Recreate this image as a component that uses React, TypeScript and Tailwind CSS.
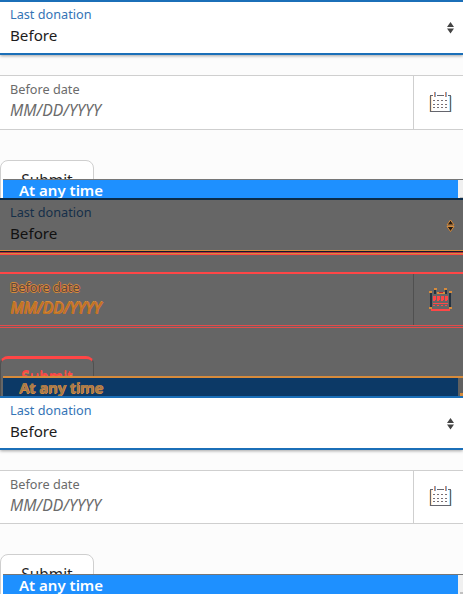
type Variant = "first" | "diff" | "last";

const tones = {
  first: {
    page: "bg-[#fcfcfc]",
    box: "bg-white",
    blue: "border-[#1b6fb8]",
    label: "text-[#3474b6]",
    value: "text-[#1d1d1d]",
    shadow: "shadow-[0_1px_3px_rgba(0,0,0,0.35)]",
    select: "h-[55px]",
    gap: "mt-5",
    date: "h-[55px] border-y border-[#cfcfcf] pt-1",
    iconCell: "-mt-1 pt-4",
    divider: "border-[#cfcfcf]",
    dateLabel: "text-[#6b6b6b]",
    hint: "text-[#6b6b6b]",
    submitGap: "mt-[30px]",
    submit: "border-[#cfcfcf] text-[#1d1d1d] pt-2",
    menuTop: "top-[179px] border-[#767676]",
    menuFill: "bg-[#1e90ff] text-white leading-5",
    track: "bg-[#f0f0f0]",
    thumb: "mt-[17px] bg-[#c1c1c1]",
  },
  diff: {
    page: "bg-[#656565]",
    box: "bg-[#666666]",
    blue: "border-[#0b2c4a]",
    label: "text-[#152f49]",
    value: "text-[#111111]",
    shadow: "",
    select: "h-[52px] !border-b-0",
    gap: "mt-[17px]",
    date: "h-[53px] border-t-2 border-[#ff4646] pt-1",
    iconCell: "-mt-1 pt-3.5",
    divider: "border-[#505050]",
    dateLabel: "text-[#5a4a40] [text-shadow:0_-1px_#d58a3a,0_1px_#d58a3a,1px_0_#f0583f,-1px_0_#d58a3a]",
    hint: "text-[#c07424] [text-shadow:0_-1px_#d68b3c,1px_0_#d8702c]",
    submitGap: "mt-[28px]",
    submit: "border-[#505050] border-t-[3px] border-t-[#ff4646] text-[#ff4646] pt-[7px] [text-shadow:0_1px_#d68b3c,0_-1px_#ff4646]",
    menuTop: "top-[178px] border-[#d68b3c] border-t-2",
    menuFill: "bg-[#0c3966] text-[#a67a4e] leading-[18px] [text-shadow:0_1px_#d68b3c,1px_0_#d68b3c]",
    track: "bg-[#606060]",
    thumb: "mt-[15px] bg-[#d68b3c]",
  },
  last: {
    page: "bg-[#fcfcfc]",
    box: "bg-white",
    blue: "border-[#1b6fb8]",
    label: "text-[#3474b6]",
    value: "text-[#1d1d1d]",
    shadow: "shadow-[0_1px_3px_rgba(0,0,0,0.35)]",
    select: "h-[54px]",
    gap: "mt-5",
    date: "h-[54px] border-y border-[#cfcfcf] pt-1",
    iconCell: "-mt-1 pt-[15px]",
    divider: "border-[#cfcfcf]",
    dateLabel: "text-[#6b6b6b]",
    hint: "text-[#6b6b6b]",
    submitGap: "mt-[30px]",
    submit: "border-[#cfcfcf] text-[#1d1d1d] pt-2",
    menuTop: "top-[178px] border-[#767676]",
    menuFill: "bg-[#1e90ff] text-white leading-5",
    track: "bg-[#f0f0f0]",
    thumb: "mt-[17px] bg-[#c1c1c1]",
  },
};

const columns = [4, 8, 12, 16];

function CalendarIcon({ variant }: { variant: Variant }) {
  const diff = variant === "diff";
  return (
    <svg width="23" height="24" viewBox="0 0 23 24" shapeRendering="crispEdges" className="shrink-0">
      {diff ? (
        <>
          <path d="M1 4h2v16H1zM20 4h2v16h-2z" fill="#263442" />
          <path d="M0 3h3v2H0zM20 3h3v2h-3zM0 19h3v2H0zM20 19h3v2h-3zM5 0h3v2H5zM15 0h3v2h-3zM8 4h8v2H8z" fill="#d68b3c" />
          <path d="M10 4h4v1h-4z" fill="#c62030" />
          <path d="M5 2h2v4H5zM16 2h2v4h-2z" fill="#263442" />
          <path d="M2 21h19v2H2zM4 8h3v4H4zM8 8h3v4H8zM12 8h3v4h-3zM16 8h3v4h-3zM4 12h2v1H4zM8 12h2v1H8zM12 12h2v1h-2zM16 12h2v1h-2zM4 15h15v1H4zM4 17h2v1H4zM8 17h2v1H8zM12 17h2v1h-2zM16 17h2v1h-2z" fill="#ff4646" />
        </>
      ) : (
        <>
          <path d="M0 4h1v16H0zM2 4h1v15H2z" fill="#ffe7c7" />
          <path d="M22 4h1v16h-1zM20 4h1v15h-1z" fill="#bfe7fc" />
          <path d="M1 3h3v1H2v15h19V4h-2V3h3v17H1zM8 3h7v1H8z" fill="#65656d" />
          <path d="M5 0h1v5H5zM16 0h1v5h-1z" fill="#d58b69" />
          <path d="M6 0h1v5H6zM17 0h1v5h-1z" fill="#7caad7" />
          {[8, 12, 15].map((y) =>
            columns.map((x) => (
              <g key={`${x}-${y}`}>
                <path d={`M${x} ${y}h1v1h-1z`} fill="#8b6e61" />
                <path d={`M${x + 1} ${y}h1v1h-1z`} fill="#66718a" />
              </g>
            )),
          )}
        </>
      )}
    </svg>
  );
}

function SortIcon({ diff }: { diff: boolean }) {
  return (
    <svg width="7" height="12" viewBox="0 0 7 12" className="overflow-visible">
      <path d="M3.5 0 7 5H0zM0 6.5h7l-3.5 5z" fill={diff ? "#241a10" : "#444444"} stroke={diff ? "#d68b3c" : "none"} />
    </svg>
  );
}

function FormPanel({ variant }: { variant: Variant }) {
  const t = tones[variant];
  const diff = variant === "diff";
  return (
    <section className={`relative h-[198px] overflow-hidden ${t.page}`}>
      <div className={`flex justify-between border-y-2 pr-[9px] pl-2.5 ${t.select} ${t.blue} ${t.box} ${t.shadow}`}>
        <div className="pt-[3px]">
          <div className={`text-[12.7px] leading-[18px] ${t.label}`}>Last donation</div>
          <div className={`text-[15.2px] leading-6 ${t.value}`}>Before</div>
        </div>
        <div className="pt-5"><SortIcon diff={diff} /></div>
      </div>
      {diff && (
        <div>
          <div className="h-px bg-[#d68b3c]" />
          <div className="h-px bg-[#111b2b]" />
          <div className="h-px bg-[#b52b40]" />
          <div className="h-px bg-[#d68b3c]" />
          <div className="h-px bg-[#ff4646]" />
        </div>
      )}
      <div className={`flex justify-between pl-2.5 ${t.gap} ${t.date} ${t.box}`}>
        <div>
          <div className={`text-[12.7px] leading-[18px] ${t.dateLabel}`}>Before date</div>
          <div className={`text-[15.8px] leading-6 italic ${t.hint}`}>MM/DD/YYYY</div>
        </div>
        <div className={`flex w-[50px] items-start border-l pl-[15px] ${t.iconCell} ${t.divider}`}>
          <CalendarIcon variant={variant} />
        </div>
      </div>
      {diff && <div className="h-[3px] border-y border-[#e44b4b]" />}
      <div className={`flex h-14 w-[94px] justify-center rounded-lg border text-[15.4px] leading-6 ${t.submitGap} ${t.submit} ${t.box}`}>
        Submit
      </div>
      <div className={`absolute right-0 left-[3px] flex h-10 border-t ${t.menuTop}`}>
        <div className={`w-[455px] pl-4 text-[15px] font-semibold ${t.menuFill}`}>At any time</div>
        <div className={`flex-1 pl-0.5 ${t.track}`}>
          <div className={`h-5 ${t.thumb}`} />
        </div>
      </div>
    </section>
  );
}

export default function App() {
  return (
    <main className="h-[594px] w-[463px] overflow-hidden font-['Noto_Sans',sans-serif]">
      <FormPanel variant="first" />
      <FormPanel variant="diff" />
      <FormPanel variant="last" />
    </main>
  );
}
